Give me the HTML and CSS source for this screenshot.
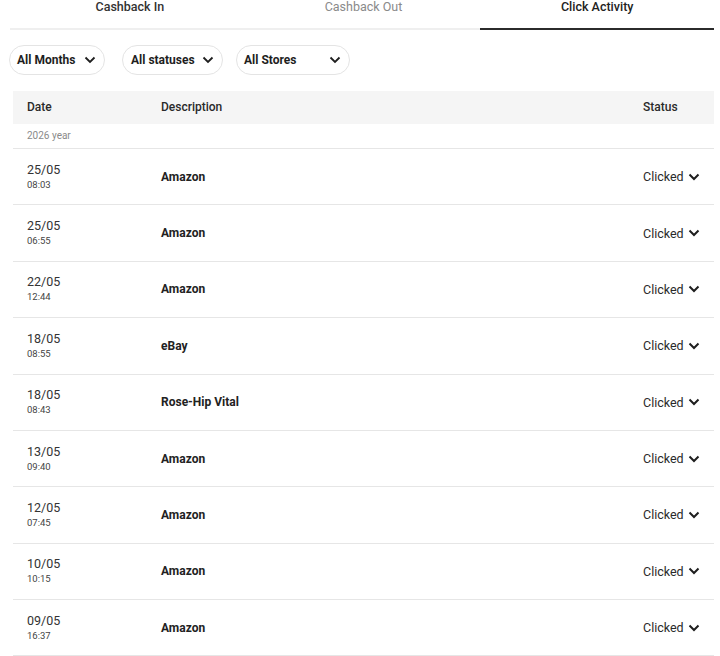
FILE: index.html
```html
<!DOCTYPE html>
<html>
<head>
    <title>Click Activity</title>
    <link rel="stylesheet" href="styles.css">
</head>
<body>
    <div class="page">
        <!-- Tabs -->
        <div class="tabs">
            <div class="tab tab-in">Cashback In</div>
            <div class="tab tab-out">Cashback Out</div>
            <div class="tab tab-active">Click Activity</div>
        </div>

        <!-- Filters -->
        <div class="filters">
            <button class="pill pill-months">All Months
                <svg class="chev" viewBox="0 0 12 8"><path d="M1.5 1.5 L6 6 L10.5 1.5"/></svg>
            </button>
            <button class="pill pill-statuses">All statuses
                <svg class="chev" viewBox="0 0 12 8"><path d="M1.5 1.5 L6 6 L10.5 1.5"/></svg>
            </button>
            <button class="pill pill-stores">All Stores
                <svg class="chev" viewBox="0 0 12 8"><path d="M1.5 1.5 L6 6 L10.5 1.5"/></svg>
            </button>
        </div>

        <!-- Activity table -->
        <div class="table">
            <div class="head">
                <div class="col-date">Date</div>
                <div class="col-desc">Description</div>
                <div class="col-status">Status</div>
            </div>
            <div class="year">2026 year</div>
            <div id="rows"></div>
        </div>
    </div>

    <script>
        var clicks = [
            ["25/05", "08:03", "Amazon"],
            ["25/05", "06:55", "Amazon"],
            ["22/05", "12:44", "Amazon"],
            ["18/05", "08:55", "eBay"],
            ["18/05", "08:43", "Rose-Hip Vital"],
            ["13/05", "09:40", "Amazon"],
            ["12/05", "07:45", "Amazon"],
            ["10/05", "10:15", "Amazon"],
            ["09/05", "16:37", "Amazon"]
        ];

        var rows = document.getElementById("rows");
        clicks.forEach(function(c) {
            var row = document.createElement("div");
            row.className = "row";
            row.innerHTML =
                '<div class="col-date"><div class="day">' + c[0] + '</div><div class="time">' + c[1] + '</div></div>' +
                '<div class="col-desc store">' + c[2] + '</div>' +
                '<div class="col-status status">Clicked ' +
                '<svg class="chev-sm" viewBox="0 0 12 8"><path d="M1.5 1.5 L6 6 L10.5 1.5"/></svg></div>';
            rows.appendChild(row);
        });
    </script>
</body>
</html>
```
FILE: styles.css
```css
body {
    margin: 0;
    font-family: Roboto, "Liberation Sans", Arial, sans-serif;
    color: #222;
    background-color: #fff;
}

.page {
    padding: 0 6px 0 13px;
}

/* Tabs */
.tabs {
    display: flex;
    height: 28px;
    border-bottom: 2px solid #efefef;
    margin-left: -3px;
    padding-left: 3px;
}

.tab {
    flex: 1;
    text-align: center;
    font-size: 12.5px;
    line-height: 14px;
    font-weight: 500;
    color: #333;
}

.tab-out {
    color: #8a8a8a;
    font-weight: 400;
}

.tab-active {
    color: #222;
    border-bottom: 2px solid #2b2b2b;
    margin-bottom: -2px;
}

/* Filters */
.filters {
    display: flex;
    margin: 15px 0 0 -4px;
}

.pill {
    display: flex;
    align-items: center;
    justify-content: space-between;
    height: 30px;
    padding: 0 8px 0 7px;
    background: #fff;
    border: 1px solid #e4e4e4;
    border-radius: 15px;
    font-family: inherit;
    font-size: 12px;
    font-weight: 700;
    color: #1e1e1e;
}

.pill-months { width: 96px; }
.pill-statuses { width: 101px; margin-left: 17px; padding-left: 8px; }
.pill-stores { width: 114px; margin-left: 13px; padding-left: 7px; }

.chev {
    width: 12px;
    height: 8px;
    fill: none;
    stroke: #1e1e1e;
    stroke-width: 1.8;
}

/* Table */
.table {
    margin-top: 16px;
}

.head, .row {
    display: flex;
    align-items: center;
}

.head {
    height: 33px;
    padding-bottom: 1px;
    box-sizing: border-box;
    background-color: #f5f5f5;
    font-size: 12px;
    font-weight: 500;
    color: #2a2a2a;
}

.col-date {
    width: 134px;
    padding-left: 14px;
}

.col-desc {
    flex: 1;
}

.col-status {
    width: 71px;
}

.year {
    height: 24px;
    line-height: 24px;
    padding-left: 14px;
    font-size: 10px;
    color: #8a8a8a;
    border-bottom: 1px solid #e6e6e6;
}

.row {
    height: 55.375px;
    border-bottom: 1px solid #e6e6e6;
}

.day {
    font-size: 12.5px;
    color: #333;
    line-height: 15px;
}

.time {
    font-size: 9.5px;
    color: #444;
    line-height: 14px;
    margin-top: 1px;
}

.store {
    font-size: 12px;
    font-weight: 700;
    color: #222;
}

.status {
    display: flex;
    align-items: center;
    font-size: 12.5px;
    color: #2a2a2a;
}

.chev-sm {
    width: 12px;
    height: 8px;
    margin-left: 4px;
    fill: none;
    stroke: #1e1e1e;
    stroke-width: 2;
}
```
